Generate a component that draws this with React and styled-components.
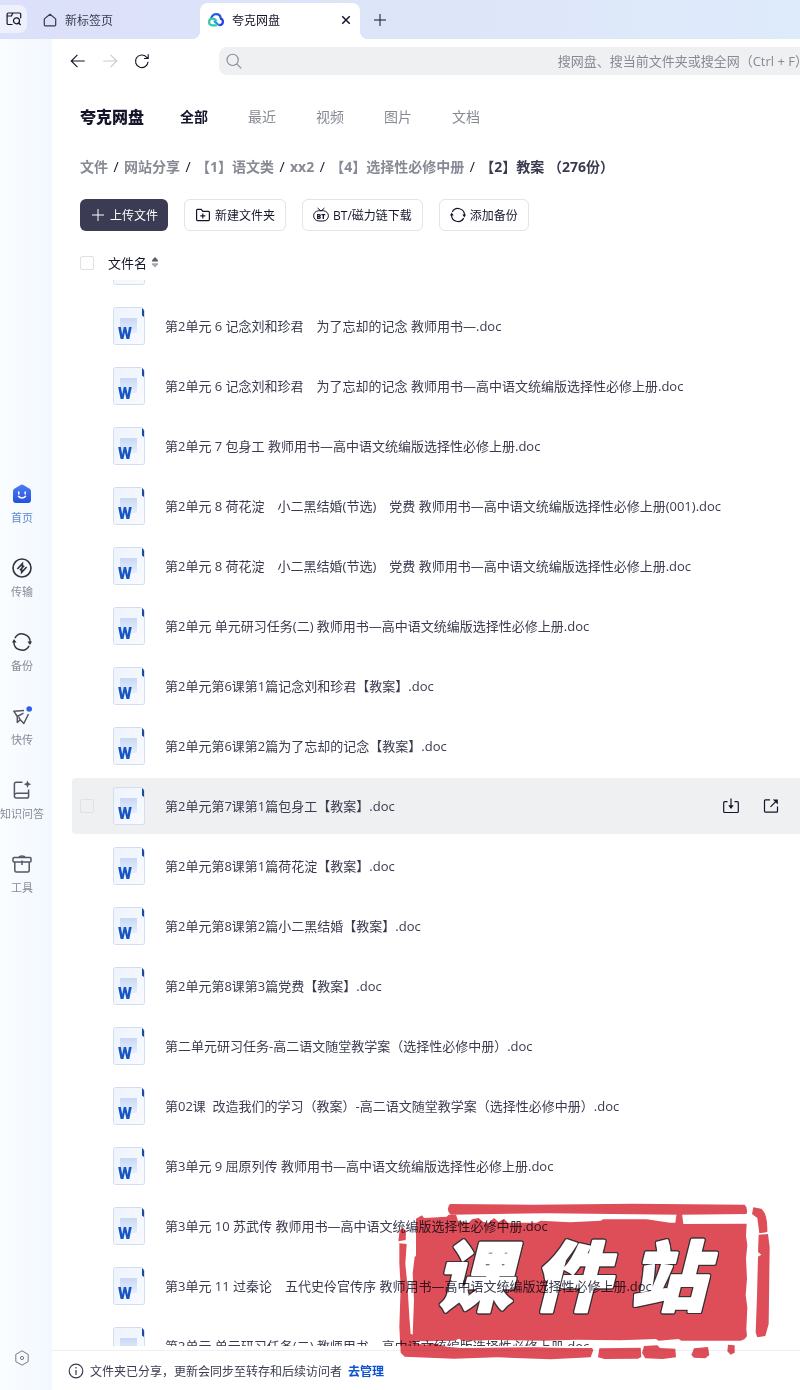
import React, { useLayoutEffect, useRef } from 'react';
import styled, { createGlobalStyle, css } from 'styled-components';

const colors = {
  text: '#3a3b4e',
  dark: '#14152a',
  muted: '#878a94',
  blue: '#0d53cf',
  border: '#e2e4e9',
  fill: '#eff0f2'
};

const fontSizes = {
  small: '11px',
  normal: '12px',
  medium: '13px',
  large: '14px',
  xlarge: '16px'
};

const GlobalStyle = createGlobalStyle`
  * {
    box-sizing: border-box;
  }

  body {
    margin: 0;
    overflow: hidden;
    background: white;
    color: ${colors.text};
    font-family: 'Open Sans', 'Noto Sans CJK SC', sans-serif;
    font-size: ${fontSizes.medium};
  }

  button,
  input {
    font-family: inherit;
    margin: 0;
  }

  svg {
    display: block;
    flex: none;
  }
`;

const Window = styled.div`
  position: relative;
  display: flex;
  flex-direction: column;
  height: 100vh;
  overflow: hidden;
`;

const TabBar = styled.header`
  display: flex;
  align-items: flex-end;
  flex: none;
  height: 39px;
  background: linear-gradient(90deg, #dce0fa, #dde5f8 50%, #deebfb);
`;

const PlainButton = styled.button`
  display: flex;
  align-items: center;
  justify-content: center;
  padding: 0;
  border: 0;
  background: none;
  color: ${props => props.$color || colors.dark};
`;

const TabSearch = styled(PlainButton)`
  width: 27px;
  height: 28px;
  margin-bottom: 6px;
  border-radius: 0 8px 8px 0;
  background: #eef0fc;
`;

const Tab = styled.div`
  position: relative;
  display: flex;
  align-items: center;
  gap: 8px;
  height: 39px;
  width: 173px;
  padding: 0 16px;
  font-size: ${fontSizes.normal};

  ${props =>
    props.$active &&
    css`
      width: 160px;
      height: 36px;
      padding: 0 8px 3px;
      border-radius: 8px 8px 0 0;
      background: white;
      color: ${colors.dark};

      &::before,
      &::after {
        content: '';
        position: absolute;
        bottom: 0;
        width: 8px;
        height: 8px;
      }

      &::before {
        left: -8px;
        background: radial-gradient(circle at 0 0, transparent 8px, white 8px);
      }

      &::after {
        right: -8px;
        background: radial-gradient(circle at 100% 0, transparent 8px, white 8px);
      }
    `};
`;

const TabTitle = styled.span`
  flex: 1;
`;

const NewTab = styled(PlainButton)`
  width: 40px;
  height: 39px;
`;

const Body = styled.div`
  display: flex;
  flex: 1;
  min-height: 0;
`;

const Sidebar = styled.nav`
  display: flex;
  flex-direction: column;
  align-items: center;
  justify-content: space-between;
  flex: none;
  width: 52px;
  padding: 445px 8px 24px 0;
  background: linear-gradient(90deg, #fafdff, #f3f8ff);
`;

const SidebarItems = styled.div`
  display: flex;
  flex-direction: column;
  gap: 32px;
`;

const SidebarItem = styled.a`
  display: flex;
  flex-direction: column;
  align-items: center;
  gap: 6px;
  color: ${props => (props.$active ? '#5b8bd0' : '#898b97')};
  font-size: ${fontSizes.small};
  line-height: 16px;
  text-decoration: none;
  white-space: nowrap;
`;

const Main = styled.main`
  display: flex;
  flex-direction: column;
  flex: 1;
  min-width: 0;
  overflow: hidden;
`;

const Toolbar = styled.div`
  display: flex;
  align-items: center;
  flex: none;
  height: 44px;
  padding-left: 17px;
`;

const History = styled.div`
  display: flex;
  gap: 14px;
  width: 150px;
`;

const SearchBox = styled.label`
  display: flex;
  align-items: center;
  flex: 1;
  height: 28px;
  margin-right: -14px;
  padding: 0 6px;
  border-radius: 8px 0 0 8px;
  background: ${colors.fill};
  color: ${colors.muted};
`;

const SearchInput = styled.input`
  flex: 1;
  min-width: 0;
  padding: 0;
  border: 0;
  outline: 0;
  background: none;
  font-size: ${fontSizes.medium};
  text-align: right;

  &::placeholder {
    color: ${colors.muted};
    opacity: 1;
  }
`;

const Categories = styled.div`
  display: flex;
  align-items: center;
  flex: none;
  gap: 40px;
  height: 66px;
  padding-left: 28px;
`;

const Brand = styled.h1`
  margin: 0 -4px 0 0;
  color: ${colors.dark};
  font-size: ${fontSizes.xlarge};
  font-weight: 900;
`;

const Category = styled.a`
  color: ${props => (props.$active ? colors.dark : colors.muted)};
  font-size: ${fontSizes.large};
  font-weight: ${props => (props.$active ? 700 : 400)};
  text-decoration: none;
`;

const Breadcrumb = styled.nav`
  display: flex;
  align-items: center;
  flex: none;
  gap: 5px;
  height: 34px;
  padding-left: 28px;
  color: ${colors.dark};
  font-size: ${fontSizes.large};
  white-space: nowrap;
`;

const Crumb = styled.a`
  color: ${props => (props.$current ? colors.text : colors.muted)};
  font-weight: 700;
  text-decoration: none;
`;

const Separator = styled.span`
  width: 6px;
  text-align: center;
`;

const Actions = styled.div`
  display: flex;
  flex: none;
  gap: 16px;
  padding: 16px 28px;
`;

const ActionButton = styled.button`
  display: flex;
  align-items: center;
  gap: 4px;
  height: 32px;
  padding: 0 10px;
  border: ${props => (props.$primary ? '0' : `1px solid ${colors.border}`)};
  border-radius: 6px;
  background: ${props => (props.$primary ? '#3b3b53' : 'white')};
  color: ${props => (props.$primary ? 'white' : colors.dark)};
  font-size: ${fontSizes.normal};
  white-space: nowrap;
`;

const ListHeader = styled.div`
  display: flex;
  align-items: center;
  flex: none;
  gap: 14px;
  height: 33px;
  padding: 0 0 2px 28px;
  color: ${colors.dark};
`;

const SortButton = styled(PlainButton)`
  gap: 5px;
  font-size: ${fontSizes.medium};
`;

const Checkbox = styled.input`
  appearance: none;
  flex: none;
  width: 14px;
  height: 14px;
  border: 1px solid #dfe1e6;
  border-radius: 2px;
`;

const FileScroller = styled.div`
  flex: 1;
  min-height: 0;
  margin-bottom: 4px;
  padding-left: 20px;
  overflow-y: auto;
  scrollbar-width: none;
`;

const FileList = styled.ul`
  display: flex;
  flex-direction: column;
  gap: 4px;
  margin: 0;
  padding: 0;
  list-style: none;
`;

const RowActions = styled.div`
  display: flex;
  gap: 24px;
`;

const FileRow = styled.li`
  display: flex;
  align-items: center;
  flex: none;
  height: 56px;
  padding: 0 21px 0 8px;
  border-radius: 4px 0 0 4px;
  background: ${props => (props.$hovered ? colors.fill : 'none')};

  ${Checkbox}, ${RowActions} {
    visibility: ${props => (props.$hovered ? 'visible' : 'hidden')};
  }
`;

const FileLabel = styled.label`
  display: flex;
  align-items: center;
  flex: 1;
  gap: 20px;
  min-width: 0;
  margin-left: 19px;
`;

const FileName = styled.span`
  padding-bottom: 2px;
  white-space: pre;
`;

const Notice = styled.footer`
  display: flex;
  align-items: center;
  flex: none;
  gap: 6px;
  height: 40px;
  padding-left: 16px;
  border-top: 1px solid ${colors.fill};
  font-size: ${fontSizes.normal};
`;

const NoticeLink = styled.a`
  color: ${colors.blue};
  font-weight: 700;
  text-decoration: none;
`;

const StampMark = styled.svg`
  position: absolute;
  right: 0;
  bottom: 20px;
  mix-blend-mode: multiply;
  pointer-events: none;
`;

const StampText = styled.text`
  fill: white;
  stroke: white;
  stroke-width: 7px;
  stroke-linejoin: round;
  filter: drop-shadow(3px 0 #3c3034) drop-shadow(-3px 0 #3c3034)
    drop-shadow(0 3px #3c3034) drop-shadow(0 -3px #3c3034);
  font-family: 'Noto Sans CJK SC', sans-serif;
  font-size: 228px;
  font-style: italic;
  font-weight: 900;
`;

const Icon = ({ size = 16, stroke = 1.2, children, ...props }) => (
  <svg
    width={size}
    height={size}
    viewBox="0 0 16 16"
    fill="none"
    stroke="currentColor"
    strokeWidth={stroke}
    aria-hidden="true"
    {...props}
  >
    {children}
  </svg>
);

const TabSearchIcon = () => (
  <Icon>
    <path d="M6.5 13.5H2.3A1.2 1.2 0 0 1 1.1 12.3V3.2A1.2 1.2 0 0 1 2.3 2h11.2a1.2 1.2 0 0 1 1.2 1.2v4M1.1 5h4.4l1.2-2.8" />
    <circle cx="10.5" cy="9.8" r="3" />
    <path d="M12.7 12l2 2" />
  </Icon>
);

const HouseIcon = () => (
  <Icon size={14} stroke={1.4}>
    <path d="M1.5 6.7L8 1.4l6.5 5.3v7.1a.9.9 0 0 1-.9.9H2.4a.9.9 0 0 1-.9-.9z" strokeLinejoin="round" />
  </Icon>
);

const CloudIcon = () => (
  <svg width="16" height="14" viewBox="0 0 16 14" fill="none" strokeWidth="2.2" aria-hidden="true">
    <path d="M3.3 6.2C3 3.4 5.2 1.2 8 1.2s4.6 1.8 4.8 4.4" stroke="#2456e8" />
    <path d="M12 5.3c1.8.3 2.9 1.5 2.9 3.3 0 2.1-1.5 3.6-3.8 3.6" stroke="#243fe0" />
    <path d="M11.5 12.2C9 12.2 8.6 8.4 5.8 8.4" stroke="#1b8ff0" />
    <path d="M8.8 12.3H4.6C2.5 12.3 1.1 11 1.1 9s1.3-3.3 3.5-3.3c1.7 0 3 .9 4 2.3" stroke="#31c7a7" />
  </svg>
);

const CloseIcon = () => (
  <Icon size={12} stroke={2}>
    <path d="M3 3l10 10M13 3L3 13" />
  </Icon>
);

const PlusIcon = () => (
  <Icon stroke={1}>
    <path d="M8 2v12M2 8h12" />
  </Icon>
);

const ArrowIcon = ({ forward }) => (
  <Icon size={18} stroke={1}>
    <path d={forward ? 'M2 8h12M8.5 2.5L14 8l-5.5 5.5' : 'M14 8H2M7.5 2.5L2 8l5.5 5.5'} />
  </Icon>
);

const ReloadIcon = () => (
  <Icon size={18} stroke={1}>
    <path d="M13.4 8.6A5.6 5.6 0 1 1 12 4.5L13.3 5.8M13.5 2v3.8H9.8" />
  </Icon>
);

const SearchIcon = () => (
  <Icon size={18} stroke={1}>
    <circle cx="6.8" cy="7" r="5" />
    <path d="M10.4 10.6l4 4" />
  </Icon>
);

const FolderPlusIcon = () => (
  <Icon>
    <path d="M1.6 3.2a.8.8 0 0 1 .8-.8h3.8l1.6 2h5.8a.8.8 0 0 1 .8.8v7.6a.8.8 0 0 1-.8.8H2.4a.8.8 0 0 1-.8-.8zM7.8 6.4v5M5.3 8.9h5" />
  </Icon>
);

const TorrentIcon = () => (
  <Icon stroke={1}>
    <path d="M5.5 3.7C2.6 4.2.6 6.1.6 8.8c0 3 2.4 5.2 5.4 5.2h4c3 0 5.4-2.2 5.4-5.2 0-2.7-2-4.6-4.9-5.1M4.5 1L8 4l3.5-3M5.500 3.700h5" />
    <text
      x="8"
      y="11.5"
      textAnchor="middle"
      fontSize="7"
      fontWeight="800"
      fill="currentColor"
      stroke="none"
    >
      BT
    </text>
  </Icon>
);

const SyncIcon = ({ size = 16, color }) => (
  <Icon size={size} color={color}>
    <path d="M2.3 4.9A6.5 6.5 0 0 1 14.5 8M13.7 11.1A6.5 6.5 0 0 1 1.5 8" />
    <path d="M12.3 7.6H16l-1.6 2.8zM0 8.4h3.7L1.6 5.6z" fill="currentColor" stroke="none" />
  </Icon>
);

const SortIcon = () => (
  <svg width="6" height="11" viewBox="0 0 6 11" aria-hidden="true">
    <path d="M3 0l3 3.2v1.2H0V3.2z" fill="#5b5b66" />
    <path d="M3 10.6l3-3.2V6.2H0v1.2z" fill="#a8a9b0" />
  </svg>
);

const HomeFaceIcon = () => (
  <svg width="20" height="20" viewBox="0 0 20 20" fill="none" aria-hidden="true">
    <defs>
      <linearGradient id="home" x1="0" y1="0" x2="0" y2="1">
        <stop offset="0" stopColor="#4d7df2" />
        <stop offset="1" stopColor="#2650df" />
      </linearGradient>
    </defs>
    <path
      d="M8.6.9a2.500 2.500 0 0 1 2.800 0l6.300 3.900A3 3 0 0 1 19 7.300V16a3 3 0 0 1-3 3H4a3 3 0 0 1-3-3V7.300a3 3 0 0 1 1.300-2.500z"
      fill="url(#home)"
    />
    <path d="M6.8 8v2M13.2 8v2M6.500 12.300c1.800 2.200 5.200 2.200 7 0" stroke="white" strokeWidth="1.5" strokeLinecap="round" />
  </svg>
);

const TransferIcon = () => (
  <Icon size={20} stroke={1.3} color="#34343f">
    <circle cx="8" cy="8" r="7.2" />
    <path d="M4.300 8.800l4-4.300v3M11.700 7.200l-4 4.300v-3M6.300 9.800l3.400-3.600" />
  </Icon>
);

const SendIcon = () => (
  <svg width="20" height="20" viewBox="0 0 20 20" fill="none" stroke="#555664" strokeWidth="1.5" aria-hidden="true">
    <path d="M12 4.500L1.800 5.200l3.500 5.300v6l3-2.700 3.500 3.700L16.500 8M5.300 10.500l6.200-3.400M8.300 13.800l-1.600-2.600" strokeLinejoin="round" />
    <circle cx="17.2" cy="3" r="2.8" fill="#2b62e4" stroke="none" />
  </svg>
);

const KnowledgeIcon = () => (
  <svg width="20" height="20" viewBox="0 0 20 20" fill="none" stroke="#555664" strokeWidth="1.5" aria-hidden="true">
    <path d="M10.500 2.200H4.200A1.800 1.800 0 0 0 2.400 4v12a2 2 0 0 0 2 2h10.400a1.800 1.800 0 0 0 1.800-1.800V9.500M2.800 14.500c.4-.8 1-1.200 2-1.200h11.800" />
    <path d="M15.500.4l1.100 2.700 2.700 1.100-2.700 1.100-1.100 2.700-1.100-2.700-2.700-1.100 2.700-1.100z" fill="#555664" stroke="none" />
  </svg>
);

const ToolboxIcon = () => (
  <svg width="20" height="20" viewBox="0 0 20 20" fill="none" stroke="#555664" strokeWidth="1.5" aria-hidden="true">
    <rect x="1" y="3.5" width="18" height="4.5" rx="1" />
    <path d="M2.800 8v8.500c0 .8.700 1.500 1.500 1.500h11.400c.8 0 1.500-.7 1.500-1.500V8M7 3.200C7.500 1.500 12.500 1.500 13 3.200M10 6.500v4.500" />
  </svg>
);

const SettingsIcon = () => (
  <Icon stroke={1}>
    <path d="M8 .8l6.200 3.600v7.200L8 15.200l-6.200-3.600V4.400z" strokeLinejoin="round" />
    <circle cx="8" cy="8" r="1.6" />
  </Icon>
);

const SaveIcon = () => (
  <Icon>
    <path d="M4.5 3.600H1.600a.9.9 0 0 0-.9.9v9.100a.9.9 0 0 0 .9.9h12.800a.9.9 0 0 0 .9-.9V4.500a.9.9 0 0 0-.9-.9h-2.900M8 .5v9" />
    <path d="M5.300 7.200h5.400L8 11z" fill="currentColor" stroke="none" />
  </Icon>
);

const ShareIcon = () => (
  <Icon>
    <path d="M7 1.800H2.400a.9.9 0 0 0-.9.9v10.600a.9.9 0 0 0 .9.9h11.200a.9.9 0 0 0 .9-.9V8.600M7.500 8.800l6-6" />
    <path d="M9.800 1.400h5v5z" fill="currentColor" stroke="none" />
  </Icon>
);

const InfoIcon = () => (
  <Icon>
    <circle cx="8" cy="8" r="6.8" />
    <path d="M8 7v5M8 4v1.500" />
  </Icon>
);

const WordIcon = () => (
  <svg width="32" height="38" viewBox="0 0 32 38" aria-hidden="true">
    <defs>
      <linearGradient id="page" x1="0" y1="0" x2="1" y2="1">
        <stop offset="0" stopColor="#eef3fc" />
        <stop offset="1" stopColor="#f8faff" />
      </linearGradient>
      <linearGradient id="square" x1="0" y1="0" x2="0" y2="1">
        <stop offset="0" stopColor="#c8d8f5" />
        <stop offset="1" stopColor="#e6eefb" />
      </linearGradient>
    </defs>
    <path
      d="M2.500.5h26l3 3v32a2 2 0 0 1-2 2h-27a2 2 0 0 1-2-2v-33a2 2 0 0 1 2-2z"
      fill="url(#page)"
      stroke="#d3deef"
    />
    <path d="M29 1.500h.8L31 3.500V10l-2-1.500z" fill="#1649a8" />
    <path d="M7 11h17v15H7z" fill="url(#square)" />
    <text x="12" y="32" textAnchor="middle" fontSize="16" fontWeight="900" fill="#1655c4" fontFamily="Roboto, sans-serif">
      W
    </text>
  </svg>
);

const Stamp = () => (
  <StampMark width="410" height="180" viewBox="0 0 1230 540" role="img" aria-label="课件站">
    <g fill="#de4e58">
      <path d="M180 42L430 44 730 41 1064 44Q1074 52 1070 72L870 74 470 70 182 74Q166 58 180 42z" />
      <path d="M78 86L96 76 102 84 170 80 176 74 198 74 204 92 236 98 246 88 266 84 280 96 296 98 312 84 326 96 342 86 354 98 440 98 452 92 540 97 632 92 640 88 770 88 840 98 856 98 860 70H876L880 102 1070 101 1068 138 1072 166 1068 206 1071 266 1067 316 1072 352 1069 418 1071 438Q1064 450 1052 452L874 452 866 447 806 452 798 447 690 451 560 449 460 452 310 450 216 453 208 446 192 452 104 454 76 452 68 436 72 330 68 250 74 200 78 198z" />
      <path d="M1090 52L1114 56Q1132 72 1132 116V126L1108 130 1102 84 1086 72z" />
      <path d="M1106 134L1134 132 1139 172 1136 402 1126 438 1102 442 1097 428 1101 318 1104 200 1114 194 1104 186z" />
      <path d="M40 114L48 122 47 150 25 154 29 120z" />
      <path d="M28 160L50 162 46 222 52 282 58 380 62 432 78 436 76 460 104 464 130 460 170 470 214 474 434 472 534 474 606 474 610 480 602 502 482 508 322 502 192 506 44 500 32 488 28 410 32 290 28 220z" />
      <path d="M628 475L752 473 754 501 744 506 644 507 624 502zM762 468L802 466 810 474 856 476 858 502 818 507 766 505 756 489zM912 475L954 471 958 495 946 505 912 503 904 495zM1014 464L1034 466V488L1022 494 1012 484z" />
    </g>
    <StampText y="346">
      <tspan x="136">课</tspan>
      <tspan x="430">件</tspan>
      <tspan x="720">站</tspan>
    </StampText>
  </StampMark>
);

const sections = [
  { name: '首页', icon: <HomeFaceIcon />, active: true },
  { name: '传输', icon: <TransferIcon /> },
  { name: '备份', icon: <SyncIcon size={20} color="#34343f" /> },
  { name: '快传', icon: <SendIcon /> },
  { name: '知识问答', icon: <KnowledgeIcon /> },
  { name: '工具', icon: <ToolboxIcon /> }
];

const categories = ['全部', '最近', '视频', '图片', '文档'];

const crumbs = ['文件', '网站分享', '【1】语文类', 'xx2', '【4】选择性必修中册', '【2】教案 （276份）'];

const files = [
  '第2单元 6 记念刘和珍君　为了忘却的记念.doc',
  '第2单元 6 记念刘和珍君　为了忘却的记念 教师用书—.doc',
  '第2单元 6 记念刘和珍君　为了忘却的记念 教师用书—高中语文统编版选择性必修上册.doc',
  '第2单元 7 包身工 教师用书—高中语文统编版选择性必修上册.doc',
  '第2单元 8 荷花淀　小二黑结婚(节选)　党费 教师用书—高中语文统编版选择性必修上册(001).doc',
  '第2单元 8 荷花淀　小二黑结婚(节选)　党费 教师用书—高中语文统编版选择性必修上册.doc',
  '第2单元 单元研习任务(二) 教师用书—高中语文统编版选择性必修上册.doc',
  '第2单元第6课第1篇记念刘和珍君【教案】.doc',
  '第2单元第6课第2篇为了忘却的记念【教案】.doc',
  '第2单元第7课第1篇包身工【教案】.doc',
  '第2单元第8课第1篇荷花淀【教案】.doc',
  '第2单元第8课第2篇小二黑结婚【教案】.doc',
  '第2单元第8课第3篇党费【教案】.doc',
  '第二单元研习任务-高二语文随堂教学案（选择性必修中册）.doc',
  '第02课  改造我们的学习（教案）-高二语文随堂教学案（选择性必修中册）.doc',
  '第3单元 9 屈原列传 教师用书—高中语文统编版选择性必修上册.doc',
  '第3单元 10 苏武传 教师用书—高中语文统编版选择性必修中册.doc',
  '第3单元 11 过秦论　五代史伶官传序 教师用书—高中语文统编版选择性必修上册.doc',
  '第3单元 单元研习任务(二) 教师用书—高中语文统编版选择性必修上册.doc'
];

const hoveredFile = 9;

const Files = () => {
  const scroller = useRef(null);

  useLayoutEffect(() => {
    scroller.current.scrollTop = 42;
  }, []);

  return (
    <FileScroller ref={scroller}>
      <FileList>
        {files.map((name, i) => (
          <FileRow key={name} $hovered={i === hoveredFile}>
            <Checkbox type="checkbox" id={`file-${i}`} />
            <FileLabel htmlFor={`file-${i}`}>
              <WordIcon />
              <FileName>{name}</FileName>
            </FileLabel>
            {i === hoveredFile && (
              <RowActions>
                <PlainButton aria-label="下载">
                  <SaveIcon />
                </PlainButton>
                <PlainButton aria-label="分享">
                  <ShareIcon />
                </PlainButton>
              </RowActions>
            )}
          </FileRow>
        ))}
      </FileList>
    </FileScroller>
  );
};

const App = () => (
  <Window>
    <GlobalStyle />
    <TabBar>
      <TabSearch aria-label="搜索标签页">
        <TabSearchIcon />
      </TabSearch>
      <Tab>
        <HouseIcon />
        <TabTitle>新标签页</TabTitle>
      </Tab>
      <Tab $active>
        <CloudIcon />
        <TabTitle>夸克网盘</TabTitle>
        <PlainButton aria-label="关闭">
          <CloseIcon />
        </PlainButton>
      </Tab>
      <NewTab aria-label="新建标签页">
        <PlusIcon />
      </NewTab>
    </TabBar>
    <Body>
      <Sidebar>
        <SidebarItems>
          {sections.map(({ name, icon, active }) => (
            <SidebarItem key={name} href="#" $active={active}>
              {icon}
              {name}
            </SidebarItem>
          ))}
        </SidebarItems>
        <PlainButton aria-label="设置" $color="#777985">
          <SettingsIcon />
        </PlainButton>
      </Sidebar>
      <Main>
        <Toolbar>
          <History>
            <PlainButton aria-label="后退">
              <ArrowIcon />
            </PlainButton>
            <PlainButton aria-label="前进" $color="#c9cace">
              <ArrowIcon forward />
            </PlainButton>
            <PlainButton aria-label="刷新">
              <ReloadIcon />
            </PlainButton>
          </History>
          <SearchBox>
            <SearchIcon />
            <SearchInput
              aria-label="搜索"
              placeholder="搜网盘、搜当前文件夹或搜全网（Ctrl + F）"
            />
          </SearchBox>
        </Toolbar>
        <Categories>
          <Brand>夸克网盘</Brand>
          {categories.map((name, i) => (
            <Category key={name} href="#" $active={i === 0}>
              {name}
            </Category>
          ))}
        </Categories>
        <Breadcrumb>
          {crumbs.map((name, i) => (
            <React.Fragment key={name}>
              {i > 0 && <Separator>/</Separator>}
              <Crumb href="#" $current={i === crumbs.length - 1}>
                {name}
              </Crumb>
            </React.Fragment>
          ))}
        </Breadcrumb>
        <Actions>
          <ActionButton $primary>
            <PlusIcon />
            上传文件
          </ActionButton>
          <ActionButton>
            <FolderPlusIcon />
            新建文件夹
          </ActionButton>
          <ActionButton>
            <TorrentIcon />
            BT/磁力链下载
          </ActionButton>
          <ActionButton>
            <SyncIcon />
            添加备份
          </ActionButton>
        </Actions>
        <ListHeader>
          <Checkbox type="checkbox" aria-label="全选" />
          <SortButton>
            文件名
            <SortIcon />
          </SortButton>
        </ListHeader>
        <Files />
        <Notice>
          <InfoIcon />
          <span>文件夹已分享，更新会同步至转存和后续访问者</span>
          <NoticeLink href="#">去管理</NoticeLink>
        </Notice>
      </Main>
    </Body>
    <Stamp />
  </Window>
);

export default App;
